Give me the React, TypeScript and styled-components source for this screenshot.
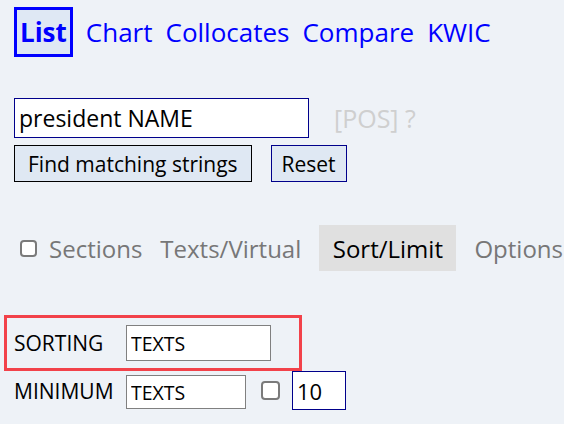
import React, { FC } from 'react';
import styled, { createGlobalStyle } from 'styled-components';

const GlobalStyle = createGlobalStyle`
  html, body {
    margin: 0;
    padding: 0;
    background-color: #eef2f7;
    font-family: 'Open Sans', 'Noto Sans', sans-serif;
  }
`;

//Parent Div
const Page = styled.div`
  width: 564px;
  height: 424px;
  overflow: hidden;
  padding: 7px 0 0 14px;
  box-sizing: border-box;
`;

//Top nav
const Nav = styled.div`
  display: flex;
  align-items: center;
  gap: 13px;
  height: 50px;
`;
const NavItem = styled.a<{ active?: boolean }>`
  font-size: 26px;
  color: #0000ff;
  text-decoration: none;
  font-weight: ${(p) => (p.active ? 700 : 400)};
  ${(p) =>
    p.active &&
    `
    border: 3px solid #0000ff;
    background-color: #dfe8f4;
    padding: 0 3px;
    height: 50px;
    box-sizing: border-box;
    display: flex;
    align-items: center;
  `}
`;

//Search
const Search = styled.div`
  margin-top: 41px;
  display: flex;
  flex-direction: column;
  gap: 7px;
`;
const Row = styled.div`
  display: flex;
  align-items: center;
`;
const WordInput = styled.input`
  width: 295px;
  height: 40px;
  box-sizing: border-box;
  border: 1px solid #00008b;
  background: #fff;
  font-family: inherit;
  font-size: 23px;
  padding: 0 4px;
  color: #000;
  outline: none;
`;
const PosHint = styled.span`
  margin-left: 25px;
  font-size: 25px;
  color: #cfcfcf;
`;
const Button = styled.button<{ blue?: boolean }>`
  height: 37px;
  box-sizing: border-box;
  border: 1px solid ${(p) => (p.blue ? '#00008b' : '#000')};
  background-color: #dfe8f3;
  font-family: inherit;
  font-size: 21px;
  padding: 0 ${(p) => (p.blue ? 10 : 13)}px;
  color: #000;
  margin-right: 19px;
  border-radius: 0;
`;

//Tabs
const Tabs = styled.div`
  margin-top: 43px;
  display: flex;
  align-items: center;
  height: 46px;
  white-space: nowrap;
`;
const Check = styled.input<{ size: number }>`
  appearance: none;
  width: ${(p) => p.size}px;
  height: ${(p) => p.size}px;
  box-sizing: border-box;
  border: 2px solid #7a7a7a;
  border-radius: 4px;
  background: #fff;
  flex-shrink: 0;
`;
const TabCheck = styled(Check)`
  margin: 0 12px 0 6px;
`;
const Tab = styled.span<{ active?: boolean }>`
  font-size: 24px;
  color: ${(p) => (p.active ? '#000' : '#777')};
  background-color: ${(p) => (p.active ? '#e0e0e0' : 'transparent')};
  height: 46px;
  display: flex;
  align-items: center;
  padding: 0 ${(p) => (p.active ? '13.5px' : '0')};
  margin-right: 18px;
`;

//Sort form
const Form = styled.div`
  margin-top: 44px;
  display: flex;
  flex-direction: column;
`;
const Highlight = styled.div`
  margin-left: -10px;
  width: 298px;
  box-sizing: border-box;
  border: 3px solid #f2424a;
  padding: 7px;
`;
const FieldRow = styled.div`
  display: flex;
  align-items: center;
`;
const Label = styled.span`
  width: 112px;
  font-size: 21px;
  color: #000;
`;
const SmallInput = styled.input<{ w: number; blue?: boolean; h?: number; shift?: number }>`
  width: ${(p) => p.w}px;
  height: ${(p) => p.h || 36}px;
  margin-top: ${(p) => p.shift || 0}px;
  box-sizing: border-box;
  border: 1px solid ${(p) => (p.blue ? '#00008b' : '#808080')};
  background: #fff;
  font-family: inherit;
  font-size: ${(p) => (p.blue ? 22 : 19.5)}px;
  padding: 0 4px;
  color: #000;
  outline: none;
`;
const RowCheck = styled(Check)`
  margin: 0 12px 0 15px;
`;

const App: FC = () => {
  return (
    <>
      <GlobalStyle />
      <Page>
        <Nav>
          <NavItem active>List</NavItem>
          <NavItem>Chart</NavItem>
          <NavItem>Collocates</NavItem>
          <NavItem>Compare</NavItem>
          <NavItem>KWIC</NavItem>
        </Nav>
        <Search>
          <Row>
            <WordInput defaultValue="president NAME" />
            <PosHint>[POS] ?</PosHint>
          </Row>
          <Row>
            <Button>Find matching strings</Button>
            <Button blue>Reset</Button>
          </Row>
        </Search>
        <Tabs>
          <TabCheck type="checkbox" size={17} />
          <Tab>Sections</Tab>
          <Tab>Texts/Virtual</Tab>
          <Tab active>Sort/Limit</Tab>
          <Tab>Options</Tab>
        </Tabs>
        <Form>
          <Highlight>
            <FieldRow>
              <Label>SORTING</Label>
              <SmallInput w={145} defaultValue="TEXTS" />
            </FieldRow>
          </Highlight>
          <FieldRow>
            <Label>MINIMUM</Label>
            <SmallInput w={120} h={34} shift={3} defaultValue="TEXTS" />
            <RowCheck type="checkbox" size={19} />
            <SmallInput w={54} h={39} blue defaultValue="10" />
          </FieldRow>
        </Form>
      </Page>
    </>
  );
};

export default App;
